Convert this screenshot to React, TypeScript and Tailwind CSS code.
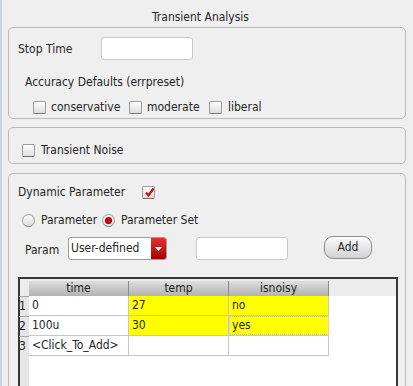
import React from 'react';

const Checkbox = ({ checked = false }: { checked?: boolean }) => (
  <span className="relative inline-block w-[13px] h-[13px] shrink-0 rounded-[2px] border border-[#9c9c9c] border-b-[#707070] bg-gradient-to-b from-[#fdfdfd] to-[#dedede]">
    {checked && (
      <svg className="absolute left-[1px] top-[0px]" width="11" height="11" viewBox="0 0 11 11">
        <path d="M2 5.5 L4.5 8.5 L9.5 1.5" fill="none" stroke="#d01010" strokeWidth="2.2" />
      </svg>
    )}
  </span>
);

const Radio = ({ selected = false }: { selected?: boolean }) => (
  <span className="relative inline-flex items-center justify-center w-[13px] h-[13px] shrink-0 rounded-full border border-[#a0a0a0] border-b-[#7a7a7a] bg-gradient-to-b from-[#fdfdfd] to-[#dcdcdc]">
    {selected && <span className="w-[5px] h-[5px] rounded-full bg-[#e00000] ring-1 ring-[#900000]" />}
  </span>
);

const TextBox = () => (
  <div className="w-[92px] h-[23px] bg-white border border-[#c9c9c9] rounded-[3px]" />
);

export default function App() {
  const rows = [
    { n: '1', time: '0', temp: '27', noisy: 'no', hl: true },
    { n: '2', time: '100u', temp: '30', noisy: 'yes', hl: true, focus: true },
    { n: '3', time: '<Click_To_Add>', temp: '', noisy: '', hl: false },
  ];

  return (
    <div
      className="w-[413px] h-[386px] overflow-hidden bg-[#efefef] border-l-2 border-[#c9d5e1] text-[12px] text-[#262626] font-stretch-condensed"
      style={{ fontFamily: '"DejaVu Sans Condensed", "DejaVu Sans", sans-serif' }}
    >
      <div className="pl-[6px] pr-[7px]">
        {/* title */}
        <div className="h-[27px] pt-[10px] leading-[14px] text-center pr-[13px]">Transient Analysis</div>

        {/* accuracy panel */}
        <div className="h-[92px] border border-[#b9b9b9] rounded-[5px] pl-[9px] pt-[9px]">
          <div className="flex items-center h-[23px]">
            <span className="w-[83px] leading-[14px]">Stop Time</span>
            <TextBox />
          </div>
          <div className="mt-[15px] pl-[7px] leading-[14px]">Accuracy Defaults (errpreset)</div>
          <div className="mt-[11px] flex items-center h-[14px] pl-[15px] leading-[14px]">
            <div className="w-[96px] flex items-center gap-[5px]">
              <Checkbox />
              <span>conservative</span>
            </div>
            <div className="w-[80px] flex items-center gap-[5px]">
              <Checkbox />
              <span>moderate</span>
            </div>
            <div className="flex items-center gap-[6px]">
              <Checkbox />
              <span>liberal</span>
            </div>
          </div>
        </div>

        {/* noise panel */}
        <div className="mt-[8px] h-[37px] border border-[#b9b9b9] rounded-[5px] pl-[13px] pt-[15px]">
          <div className="flex items-center gap-[6px] h-[14px] leading-[14px]">
            <Checkbox />
            <span>Transient Noise</span>
          </div>
        </div>

        {/* dynamic parameter panel */}
        <div className="mt-[9px] h-[240px] border border-[#b9b9b9] rounded-[5px] pl-[9px] pt-[11px]">
          <div className="flex items-center h-[14px] leading-[14px]">
            <span className="w-[124px]">Dynamic Parameter</span>
            <Checkbox checked />
          </div>

          <div className="mt-[14px] flex items-center h-[14px] leading-[14px] pl-[4px]">
            <Radio />
            <span className="ml-[6px] w-[61px]">Parameter</span>
            <Radio selected />
            <span className="ml-[6px]">Parameter Set</span>
          </div>

          <div className="mt-[10px] flex items-center h-[23px] pl-[7px]">
            <span className="w-[43px] leading-[14px] pt-[3px]">Param</span>
            <div className="w-[99px] h-[23px] flex bg-white border border-[#9e9e9e] rounded-[3px] overflow-hidden">
              <span className="flex-1 pl-[2px] leading-[21px]">User-defined</span>
              <span className="w-[15px] flex items-center justify-center bg-gradient-to-b from-[#e23030] to-[#a20000]">
                <svg width="7" height="4" viewBox="0 0 7 4">
                  <path d="M0 0 L7 0 L3.5 4 Z" fill="#ffffff" />
                </svg>
              </span>
            </div>
            <div className="ml-[29px]">
              <TextBox />
            </div>
            <button className="ml-[36px] -mt-[2px] w-[48px] h-[23px] rounded-[9px] border border-[#8c8c8c] bg-gradient-to-b from-[#fbfbfb] to-[#d2d2d2] text-[12px] leading-[21px] text-[#262626]">
              Add
            </button>
          </div>

          {/* table */}
          <div className="mt-[17px] w-[380px] h-[130px] border-2 border-[#383838] border-b-0 flex flex-col">
            <div className="h-[17px] bg-[#ececec] pt-[2px] flex">
              <div className="w-[9px]" />
              {['time', 'temp', 'isnoisy'].map((h) => (
                <div
                  key={h}
                  className="w-[100px] h-[15px] text-center leading-[15px] text-[#222] border-r border-[#8a8a8a] bg-gradient-to-b from-[#dedede] to-[#b2b2b2]"
                >
                  {h}
                </div>
              ))}
            </div>
            <div className="flex-1 flex bg-white">
              <div className="w-[9px] bg-[#e6e6e6]">
                {rows.map((r) => (
                  <div key={r.n} className="h-[20px] border-t border-[#a8a8a8] leading-[19px] text-[#222] text-[12px] -ml-[1px]">
                    {r.n}
                  </div>
                ))}
              </div>
              <div>
                {rows.map((r) => (
                  <div key={r.n} className="flex h-[20px] border-b border-[#c6c6c6]">
                    <div className="w-[100px] border-r border-[#c6c6c6] pl-[3px] leading-[19px]">{r.time}</div>
                    <div className={`w-[100px] border-r border-[#c6c6c6] pl-[3px] leading-[19px] ${r.hl ? 'bg-[#ffff00]' : ''}`}>
                      {r.temp}
                    </div>
                    <div
                      className={`w-[100px] border-r border-[#c6c6c6] leading-[17px] ${r.hl ? 'bg-[#ffff00]' : ''} ${
                        r.focus ? 'border border-dotted border-[#000] pl-[2px]' : 'pl-[3px] pt-[1px]'
                      }`}
                    >
                      {r.noisy}
                    </div>
                  </div>
                ))}
              </div>
            </div>
          </div>
        </div>
      </div>
    </div>
  );
}
